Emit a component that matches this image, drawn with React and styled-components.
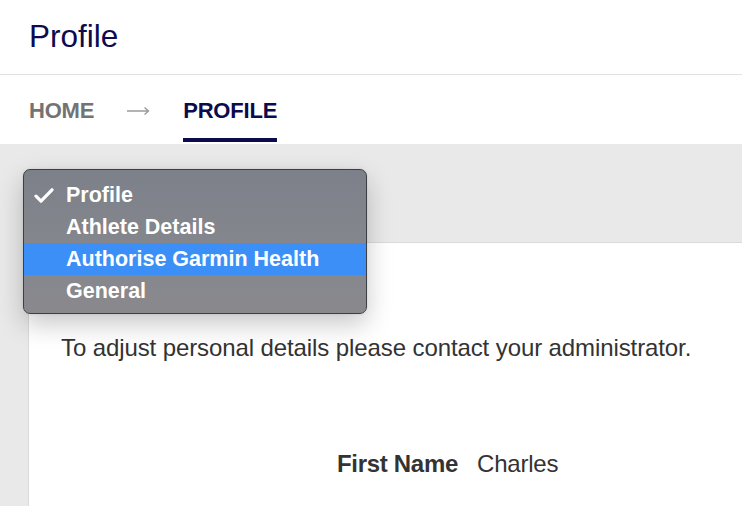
import styled, { createGlobalStyle } from 'styled-components';

const GlobalStyle = createGlobalStyle`
	html, body {
		margin: 0;
		padding: 0;
		height: 506px;
		overflow: hidden;
		background: #e9e9e9;
		font-family: 'Liberation Sans', Arial, Helvetica, sans-serif;
	}
`;

const Page = styled.div`
	height: 506px;
	overflow: hidden;
	background: #e9e9e9;
`;

const Header = styled.header`
	background: #fff;
	padding: 18px 29px 20px;
	border-bottom: 1px solid #e2e2e2;
`;

const Title = styled.h1`
	margin: 0;
	font-size: 31.5px;
	line-height: 36px;
	font-weight: 400;
	color: #0b0b4e;
`;

const Breadcrumbs = styled.nav`
	display: flex;
	align-items: flex-start;
	gap: 33px;
	background: #fff;
	padding: 24px 29px 2px;
`;

const Crumb = styled.a`
	display: block;
	font-size: 22px;
	line-height: 24px;
	font-weight: 700;
	letter-spacing: -0.2px;
	color: ${(p) => (p.active ? '#0b0b4e' : '#737373')};
	padding-bottom: 15px;
	border-bottom: 4px solid ${(p) => (p.active ? '#0b0b4e' : 'transparent')};
	text-decoration: none;
`;

const Arrow = styled.svg`
	display: block;
	margin-top: 7px;
`;

const Toolbar = styled.div`
	position: relative;
	height: 98px;
`;

const Menu = styled.ul`
	position: absolute;
	top: 25px;
	left: 23px;
	width: 342px;
	margin: 0;
	padding: 9px 0 6px;
	list-style: none;
	border: 1px solid #3e3f44;
	border-radius: 7px;
	background: linear-gradient(#7c8089, #85878d 55%, #89898d);
	box-shadow: 0 10px 26px rgba(0, 0, 0, 0.22), 0 0 3px rgba(0, 0, 0, 0.1);
	z-index: 2;
`;

const MenuItem = styled.li`
	position: relative;
	height: 32px;
	line-height: 32px;
	padding-left: 42px;
	font-size: 21.5px;
	font-weight: 700;
	color: #fff;
	background: ${(p) => (p.highlighted ? '#3b8ff7' : 'transparent')};
`;

const Check = styled.svg`
	position: absolute;
	left: 10px;
	top: 9px;
`;

const Body = styled.div`
	padding-left: 28px;
`;

const Card = styled.section`
	background: #fff;
	border-top: 1px solid #dadada;
	border-left: 1px solid #dadada;
	padding: 91px 0 40px 32px;
	color: #333;
`;

const Notice = styled.p`
	margin: 0;
	font-size: 24px;
	line-height: 28px;
	letter-spacing: -0.1px;
`;

const Fields = styled.dl`
	display: grid;
	grid-template-columns: 397px 1fr;
	column-gap: 19px;
	margin: 88px 0 0;
`;

const Label = styled.dt`
	text-align: right;
	font-size: 24px;
	line-height: 28px;
	font-weight: 700;
	letter-spacing: -0.3px;
`;

const Value = styled.dd`
	margin: 0;
	font-size: 24px;
	line-height: 28px;
	letter-spacing: -0.2px;
`;

const sections = ['Profile', 'Athlete Details', 'Authorise Garmin Health', 'General'];

const App = () => {
	const selected = 'Profile';
	const hovered = 'Authorise Garmin Health';

	return (
		<Page>
			<GlobalStyle />
			<Header>
				<Title>Profile</Title>
			</Header>
			<Breadcrumbs>
				<Crumb>HOME</Crumb>
				<Arrow width='23' height='10' viewBox='0 0 23 10'>
					<path d='M0 5h21.5M17.5 1.5l4 3.5-4 3.5' fill='none' stroke='#9b9b9b' strokeWidth='1.4' />
				</Arrow>
				<Crumb active>PROFILE</Crumb>
			</Breadcrumbs>
			<Toolbar>
				<Menu>
					{sections.map((name) => (
						<MenuItem key={name} highlighted={name === hovered}>
							{name === selected && (
								<Check width='20' height='15' viewBox='0 0 20 15'>
									<path d='M2 8.2l5 5L18 1.8' fill='none' stroke='#fff' strokeWidth='3.2' strokeLinecap='round' strokeLinejoin='round' />
								</Check>
							)}
							{name}
						</MenuItem>
					))}
				</Menu>
			</Toolbar>
			<Body>
				<Card>
					<Notice>To adjust personal details please contact your administrator.</Notice>
					<Fields>
						<Label>First Name</Label>
						<Value>Charles</Value>
					</Fields>
				</Card>
			</Body>
		</Page>
	);
};

export default App;
